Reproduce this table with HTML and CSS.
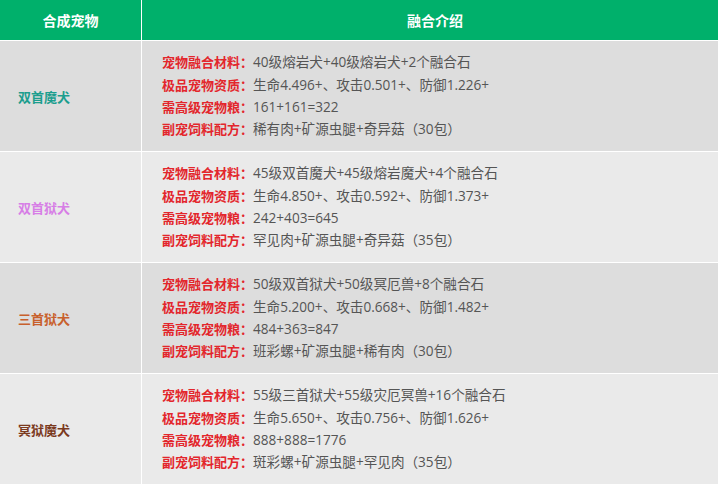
FILE: index.html
```html
<!DOCTYPE html>
<html lang="zh">
<head>
<meta charset="utf-8">
<link rel="stylesheet" href="styles.css">
</head>
<body>
<table class="tbl">
  <thead>
    <tr><th class="c1">合成宠物</th><th class="c2">融合介绍</th></tr>
  </thead>
  <tbody>
    <tr class="odd">
      <td class="name n1">双首魔犬</td>
      <td class="info">
        <p><b>宠物融合材料：</b>40级熔岩犬+40级熔岩犬+2个融合石</p>
        <p><b>极品宠物资质：</b>生命4.496+、攻击0.501+、防御1.226+</p>
        <p><b>需高级宠物粮：</b>161+161=322</p>
        <p><b>副宠饲料配方：</b>稀有肉+矿源虫腿+奇异菇（30包）</p>
      </td>
    </tr>
    <tr class="even">
      <td class="name n2">双首狱犬</td>
      <td class="info">
        <p><b>宠物融合材料：</b>45级双首魔犬+45级熔岩魔犬+4个融合石</p>
        <p><b>极品宠物资质：</b>生命4.850+、攻击0.592+、防御1.373+</p>
        <p><b>需高级宠物粮：</b>242+403=645</p>
        <p><b>副宠饲料配方：</b>罕见肉+矿源虫腿+奇异菇（35包）</p>
      </td>
    </tr>
    <tr class="odd">
      <td class="name n3">三首狱犬</td>
      <td class="info">
        <p><b>宠物融合材料：</b>50级双首狱犬+50级冥厄兽+8个融合石</p>
        <p><b>极品宠物资质：</b>生命5.200+、攻击0.668+、防御1.482+</p>
        <p><b>需高级宠物粮：</b>484+363=847</p>
        <p><b>副宠饲料配方：</b>班彩螺+矿源虫腿+稀有肉（30包）</p>
      </td>
    </tr>
    <tr class="even">
      <td class="name n4">冥狱魔犬</td>
      <td class="info">
        <p><b>宠物融合材料：</b>55级三首狱犬+55级灾厄冥兽+16个融合石</p>
        <p><b>极品宠物资质：</b>生命5.650+、攻击0.756+、防御1.626+</p>
        <p><b>需高级宠物粮：</b>888+888=1776</p>
        <p><b>副宠饲料配方：</b>斑彩螺+矿源虫腿+罕见肉（35包）</p>
      </td>
    </tr>
  </tbody>
</table>
</body>
</html>
```
FILE: styles.css
```css
html, body {
  margin: 0;
  padding: 0;
  background: #ffffff;
}
body {
  font-family: "Open Sans", "Noto Sans CJK SC", sans-serif;
  font-size: 13px;
  color: #555555;
}
.tbl {
  width: 718px;
  border-collapse: collapse;
  table-layout: fixed;
}
.tbl th, .tbl td {
  border: 1px solid #ffffff;
  padding: 0;
}
.tbl tr:first-child th { border-top: 0; }
.tbl th:first-child, .tbl td:first-child { border-left: 0; }
.tbl th:last-child, .tbl td:last-child { border-right: 0; }
.tbl tbody tr:last-child td { border-bottom: 0; }
.tbl th {
  background: #00b06b;
  color: #ffffff;
  font-size: 14px;
  font-weight: bold;
  height: 40px;
  text-align: center;
}
.c1 { width: 141px; }
.c2 { padding-left: 10px !important; }
.odd td { background: #dddddd; }
.even td { background: #eaeaea; }
.tbl td { height: 110px; vertical-align: middle; }
.name {
  padding-left: 18px !important;
  font-weight: bold;
  font-size: 13px;
}
.n1 { color: #1c9e8e; }
.n2 { color: #d77ee6; }
.n3 { color: #c8602c; }
.n4 { color: #7b3a1e; }
.info {
  padding-left: 20px !important;
}
.info p {
  margin: 0;
  font-size: 13.6px;
  line-height: 22.3px;
  white-space: nowrap;
}
.info b {
  color: #e3262c;
  font-size: 13px;
  font-weight: bold;
}
```
